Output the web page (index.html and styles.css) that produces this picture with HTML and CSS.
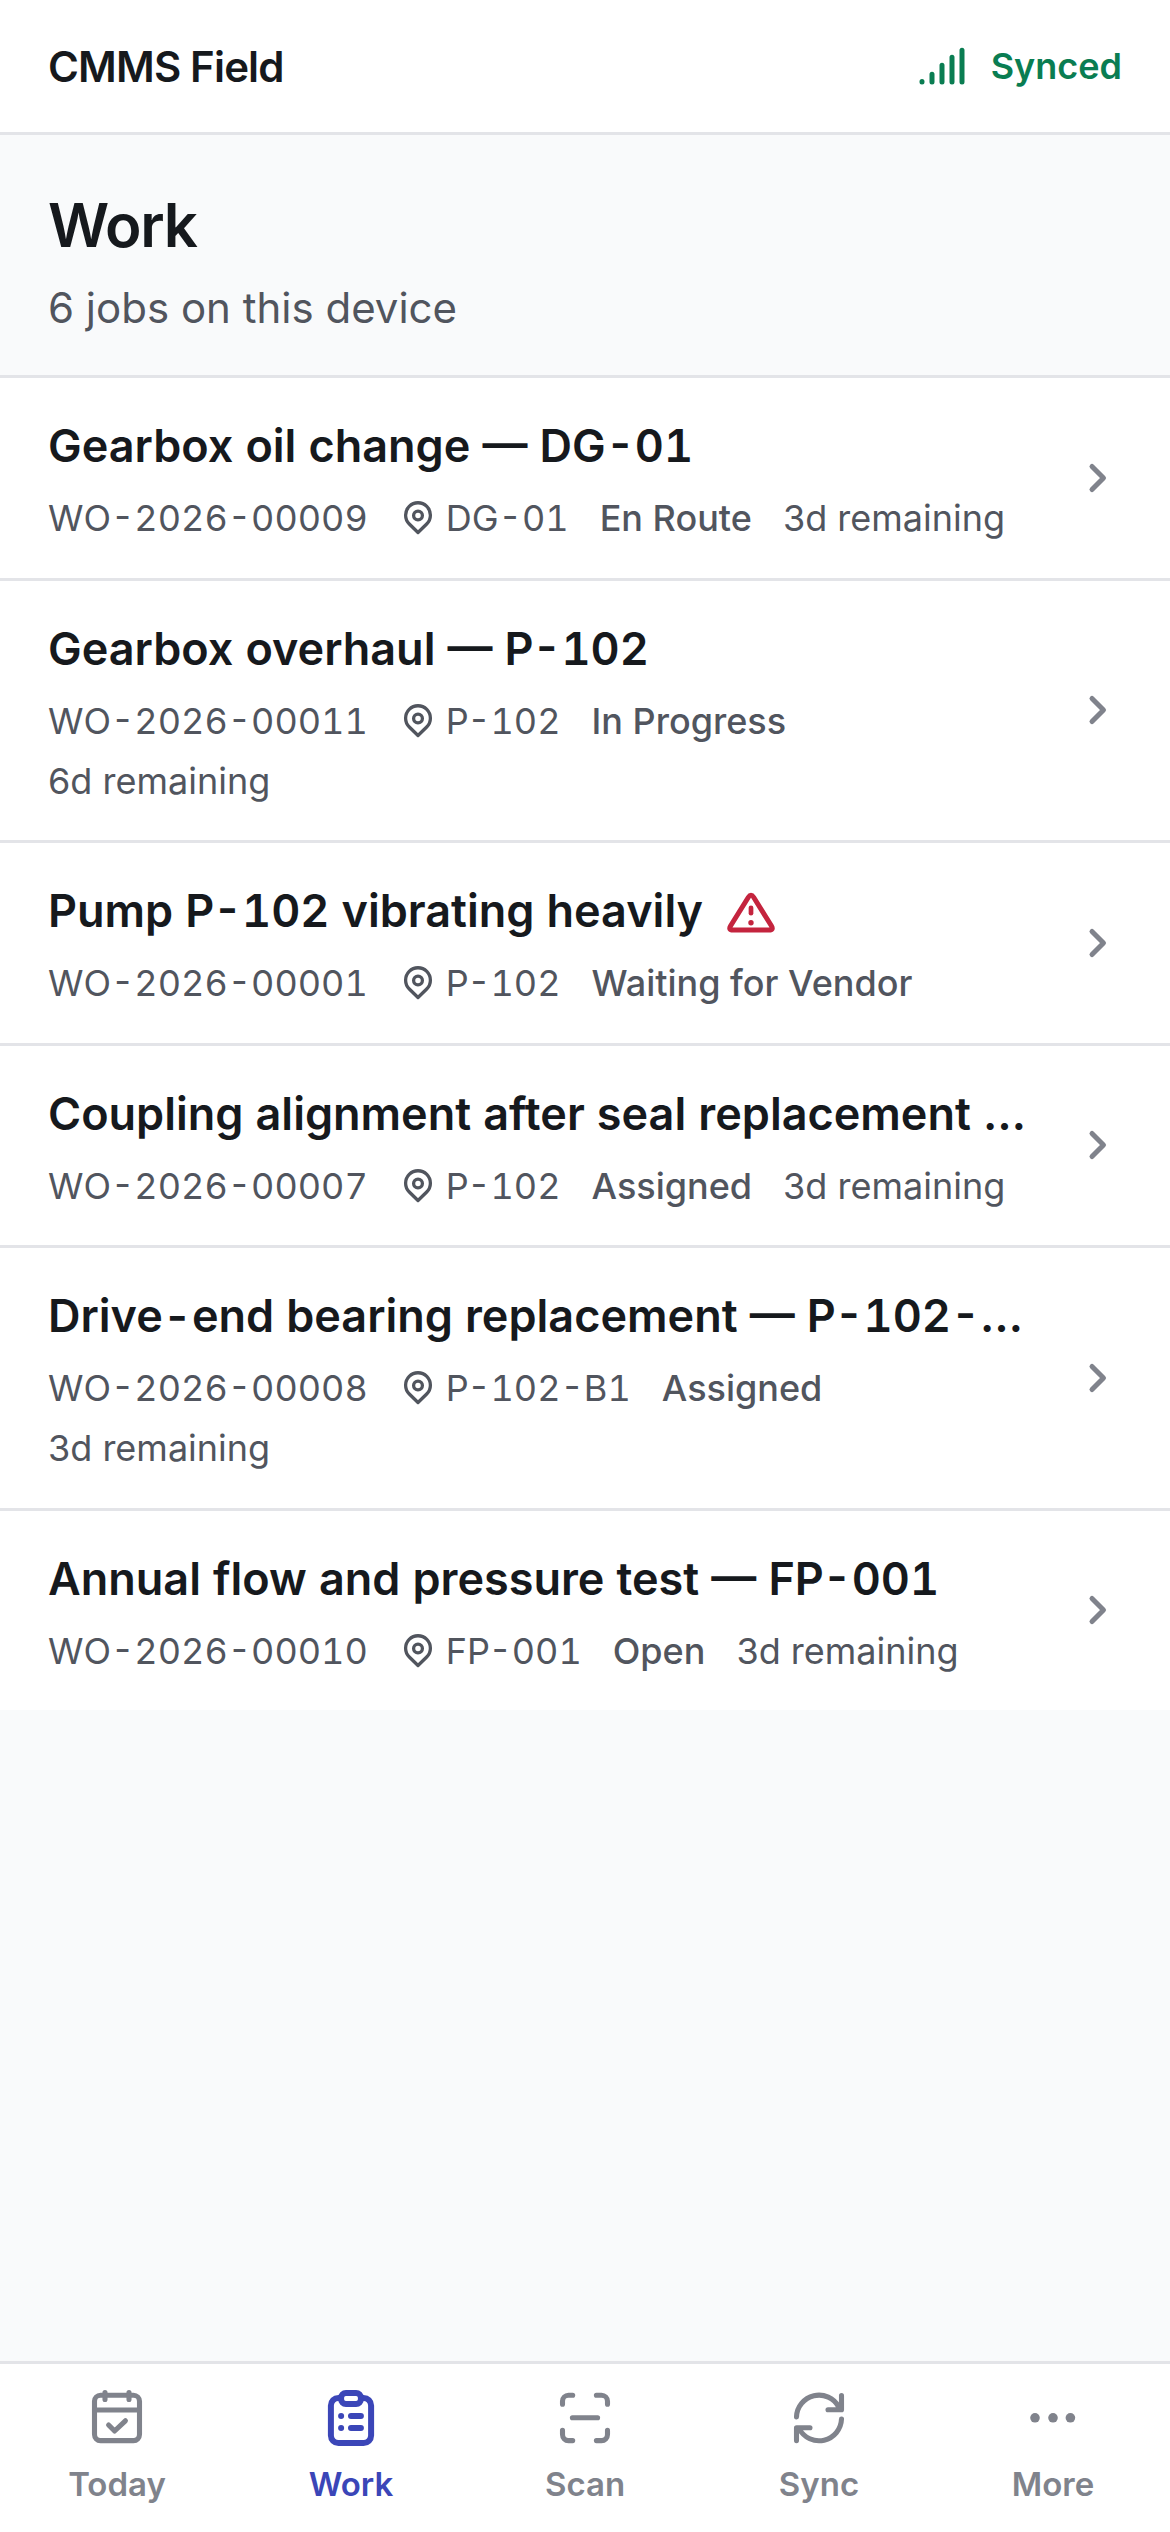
FILE: index.html
```html
<!DOCTYPE html>
<html lang="en">
<head>
	<meta charset="UTF-8">
	<meta name="viewport" content="width=device-width, initial-scale=1.0">
	<title>CMMS Field</title>
	<link rel="stylesheet" href="styles.css">
</head>
<body>
	<div class="app">
		<header class="topbar">
			<span class="topbar__title">CMMS Field</span>
			<span class="sync-state">
				<svg class="sync-state__icon" width="48" height="40" viewBox="0 0 48 40"><path d="M4 35.5v.5M14 28.300v7.700M24 19.300v16.700M34 11.300v24.700M44 4.300v31.700"/></svg>
				Synced
			</span>
		</header>

		<section class="page-head">
			<h1 class="page-head__title">Work</h1>
			<p class="page-head__sub">6 jobs on this device</p>
		</section>

		<main class="jobs">
			<a class="job">
				<div class="job__body">
					<div class="job__title"><span class="job__name">Gearbox oil change — DG-01</span></div>
					<div class="job__meta">
						<span class="job__code">WO-2026-00009</span>
						<span class="job__asset"><svg class="pin" width="38" height="42" viewBox="2 0 38 42"><path d="M21 35.5 12.3 27a12.4 12.4 0 1 1 17.4 0z"/><circle cx="21" cy="18.5" r="4.4"/></svg>DG-01</span>
						<span class="job__status">En Route</span>
						<span>3d remaining</span>
					</div>
				</div>
				<svg class="chevron" width="24" height="36" viewBox="0 0 24 36"><path d="M6 6.5 17.500 18 6 29.500"/></svg>
			</a>
			<a class="job">
				<div class="job__body">
					<div class="job__title"><span class="job__name">Gearbox overhaul — P-102</span></div>
					<div class="job__meta">
						<span class="job__code">WO-2026-00011</span>
						<span class="job__asset"><svg class="pin" width="38" height="42" viewBox="2 0 38 42"><path d="M21 35.5 12.3 27a12.4 12.4 0 1 1 17.4 0z"/><circle cx="21" cy="18.5" r="4.4"/></svg>P-102</span>
						<span class="job__status">In Progress</span>
						<span>6d remaining</span>
					</div>
				</div>
				<svg class="chevron" width="24" height="36" viewBox="0 0 24 36"><path d="M6 6.5 17.500 18 6 29.500"/></svg>
			</a>
			<a class="job">
				<div class="job__body">
					<div class="job__title">
						<span class="job__name">Pump P-102 vibrating heavily</span>
						<svg class="alert" width="48" height="48" viewBox="0 0 48 48"><path class="alert__tri" d="M21.360 10.250Q24 6 26.640 10.250L44.360 38.750Q47 43 42 43H6Q1 43 3.640 38.750z"/><path class="alert__bang" d="M24 20.800v5.400"/><circle class="alert__dot" cx="24" cy="35.800" r="2.700"/></svg>
					</div>
					<div class="job__meta">
						<span class="job__code">WO-2026-00001</span>
						<span class="job__asset"><svg class="pin" width="38" height="42" viewBox="2 0 38 42"><path d="M21 35.5 12.3 27a12.4 12.4 0 1 1 17.4 0z"/><circle cx="21" cy="18.5" r="4.4"/></svg>P-102</span>
						<span class="job__status">Waiting for Vendor</span>
					</div>
				</div>
				<svg class="chevron" width="24" height="36" viewBox="0 0 24 36"><path d="M6 6.5 17.500 18 6 29.500"/></svg>
			</a>
			<a class="job">
				<div class="job__body">
					<div class="job__title"><span class="job__name">Coupling alignment after seal replacement — P-102</span></div>
					<div class="job__meta">
						<span class="job__code">WO-2026-00007</span>
						<span class="job__asset"><svg class="pin" width="38" height="42" viewBox="2 0 38 42"><path d="M21 35.5 12.3 27a12.4 12.4 0 1 1 17.4 0z"/><circle cx="21" cy="18.5" r="4.4"/></svg>P-102</span>
						<span class="job__status">Assigned</span>
						<span>3d remaining</span>
					</div>
				</div>
				<svg class="chevron" width="24" height="36" viewBox="0 0 24 36"><path d="M6 6.5 17.500 18 6 29.500"/></svg>
			</a>
			<a class="job">
				<div class="job__body">
					<div class="job__title"><span class="job__name">Drive-end bearing replacement — P-102-B1</span></div>
					<div class="job__meta">
						<span class="job__code">WO-2026-00008</span>
						<span class="job__asset"><svg class="pin" width="38" height="42" viewBox="2 0 38 42"><path d="M21 35.5 12.3 27a12.4 12.4 0 1 1 17.4 0z"/><circle cx="21" cy="18.5" r="4.4"/></svg>P-102-B1</span>
						<span class="job__status">Assigned</span>
						<span>3d remaining</span>
					</div>
				</div>
				<svg class="chevron" width="24" height="36" viewBox="0 0 24 36"><path d="M6 6.5 17.500 18 6 29.500"/></svg>
			</a>
			<a class="job">
				<div class="job__body">
					<div class="job__title"><span class="job__name">Annual flow and pressure test — FP-001</span></div>
					<div class="job__meta">
						<span class="job__code">WO-2026-00010</span>
						<span class="job__asset"><svg class="pin" width="38" height="42" viewBox="2 0 38 42"><path d="M21 35.5 12.3 27a12.4 12.4 0 1 1 17.4 0z"/><circle cx="21" cy="18.5" r="4.4"/></svg>FP-001</span>
						<span class="job__status">Open</span>
						<span>3d remaining</span>
					</div>
				</div>
				<svg class="chevron" width="24" height="36" viewBox="0 0 24 36"><path d="M6 6.5 17.500 18 6 29.500"/></svg>
			</a>
		</main>

		<nav class="tabs">
			<a class="tab">
				<svg class="tab__icon" viewBox="0 0 24 24"><rect x="4.500" y="5.100" width="15" height="15.100" rx="2"/><path d="M16 4.200v2.300M8 4.200v2.300M4.500 10h15M9.200 15l2 2 3.600-3.400"/></svg>
				Today
			</a>
			<a class="tab tab--active">
				<svg class="tab__icon" viewBox="0 0 24 24"><rect x="5.300" y="6" width="13.400" height="15" rx="2.500"/><rect class="tab__clip" x="8.700" y="4.300" width="6.600" height="3.700" rx="1.600"/><path d="M8.700 12h.01M8.700 16h.01M12 12h3.300M12 16h3.300"/></svg>
				Work
			</a>
			<a class="tab">
				<svg class="tab__icon" viewBox="0 0 24 24"><path d="M4.500 8.100V7.100a2 2 0 0 1 2-2h1.400M15.800 5.100h1.700a2 2 0 0 1 2 2v1M19.500 16.800v1.400a2 2 0 0 1-2 2h-1.700M7.900 20.200H6.500a2 2 0 0 1-2-2v-1.400M7.800 12.600h8.400"/></svg>
				Scan
			</a>
			<a class="tab">
				<svg class="tab__icon" viewBox="0 0 24 24"><path d="M4.500 12.300A7.500 7.500 0 0 1 18.600 9M19.500 5.200v4.700H15M19.500 13A7.500 7.500 0 0 1 5.400 16.300M4.500 20.200v-4.300H9"/></svg>
				Sync
			</a>
			<a class="tab">
				<svg class="tab__icon tab__icon--fill" viewBox="0 0 24 24"><circle cx="6" cy="12.600" r="1.600"/><circle cx="12" cy="12.600" r="1.600"/><circle cx="17.800" cy="12.600" r="1.600"/></svg>
				More
			</a>
		</nav>
	</div>
</body>
</html>
```

FILE: styles.css
```css
*, *::after, *::before {
	box-sizing: border-box;
}

body {
	margin: 0;
	font-family: Inter, "Liberation Sans", sans-serif;
	color: #16191d;
	background-color: #f9fafb;
}

.app {
	display: flex;
	flex-direction: column;
	height: 2532px;
}

.topbar {
	display: flex;
	justify-content: space-between;
	align-items: center;
	height: 135px;
	padding: 0 48px;
	background-color: #fff;
	border-bottom: 3px solid #e3e4e8;
}

.topbar__title {
	font-size: 42px;
	font-weight: 600;
	letter-spacing: -0.84px;
}

.sync-state {
	display: flex;
	align-items: center;
	gap: 25px;
	font-size: 36px;
	font-weight: 600;
	color: #0a7d52;
}

.sync-state__icon {
	fill: none;
	stroke: #0a7d52;
	stroke-width: 5;
	stroke-linecap: round;
}

.page-head {
	height: 243px;
	padding: 54px 48px 0;
	border-bottom: 3px solid #e3e4e8;
}

.page-head__title {
	margin: 0;
	font-size: 60px;
	line-height: 72px;
	font-weight: 600;
	letter-spacing: -1.2px;
}

.page-head__sub {
	margin: 17px 0 0;
	font-size: 42px;
	line-height: 60px;
	color: #51555e;
}

.jobs {
	flex: 1;
}

.job {
	display: flex;
	align-items: center;
	gap: 56px;
	padding: 36px 60px 36px 48px;
	background-color: #fff;
	border-bottom: 3px solid #e3e4e8;
}

.job:last-child {
	border-bottom: none;
}

.job__body {
	flex: 1;
	min-width: 0;
}

.job__title {
	display: flex;
	align-items: center;
	gap: 24px;
	font-size: 45px;
	line-height: 63px;
	font-weight: 600;
	font-feature-settings: "tnum";
}

.job__name {
	overflow: hidden;
	text-overflow: ellipsis;
	white-space: nowrap;
}

.job__meta {
	display: flex;
	flex-wrap: wrap;
	align-items: center;
	gap: 13.5px 31px;
	margin-top: 18px;
	font-size: 36px;
	line-height: 46.5px;
	color: #51555e;
}

.job__code {
	font-feature-settings: "tnum";
}

.job__asset {
	display: flex;
	align-items: center;
	gap: 9px;
	font-feature-settings: "tnum";
}

.job__status {
	font-weight: 500;
}

.pin {
	fill: none;
	stroke: #51555e;
	stroke-width: 3.3;
	stroke-linejoin: round;
}

.alert {
	flex: none;
}

.alert__tri {
	fill: none;
	stroke: #c4243e;
	stroke-width: 5;
	stroke-linejoin: round;
}

.alert__bang {
	stroke: #c4243e;
	stroke-width: 4.7;
	stroke-linecap: round;
}

.alert__dot {
	fill: #c4243e;
}

.chevron {
	flex: none;
	fill: none;
	stroke: #80838c;
	stroke-width: 5;
	stroke-linecap: round;
	stroke-linejoin: round;
}

.tabs {
	display: grid;
	grid-template-columns: repeat(5, 1fr);
	height: 171px;
	background-color: #fff;
	border-top: 3px solid #e3e4e8;
}

.tab {
	display: flex;
	flex-direction: column;
	align-items: center;
	padding-top: 16px;
	font-size: 33px;
	line-height: 42px;
	font-weight: 600;
	color: #80838c;
}

.tab__icon {
	width: 72px;
	height: 72px;
	margin-bottom: 10.5px;
	fill: none;
	stroke: currentColor;
	stroke-width: 1.7;
	stroke-linecap: round;
	stroke-linejoin: round;
}

.tab__icon--fill {
	fill: currentColor;
	stroke: none;
}

.tab--active {
	color: #3b46b8;
}

.tab--active .tab__icon {
	stroke-width: 2;
}

.tab__clip {
	fill: #fff;
}
```
